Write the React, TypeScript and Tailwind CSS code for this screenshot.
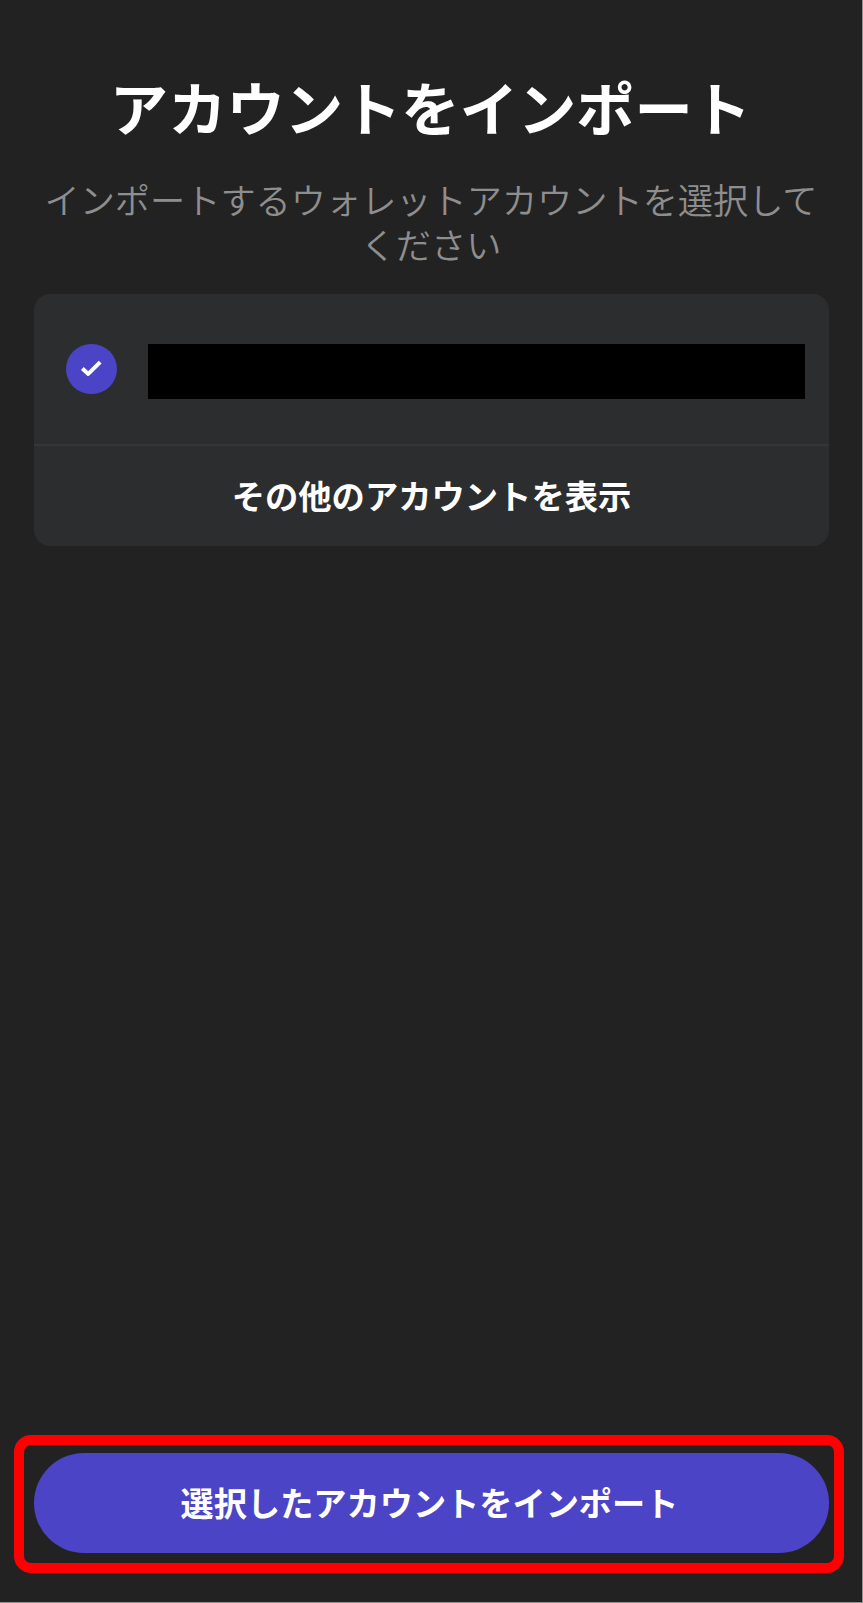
export default function App() {
  return (
    <div className="h-[1603px] w-[863px] bg-[#909090] pr-px pb-px font-['Noto_Sans_CJK_JP',sans-serif]">
      <main className="flex h-full flex-col bg-[#222222] text-white">
        <h1 className="mt-[63px] -ml-px text-center text-[58.3px] leading-[86px] font-bold whitespace-nowrap">アカウントをインポート</h1>
        <p className="mt-[30px] text-center font-['Liberation_Sans','Noto_Sans_CJK_JP',sans-serif] text-[35.2px] leading-[45px] font-[350] text-[#8e8e8e]">
          インポートするウォレットアカウントを選択して
          <br />
          ください
        </p>
        <section className="mt-[25px] ml-[34px] h-[252px] w-[795px] shrink-0 overflow-hidden rounded-[16px] bg-[#2c2d2f]">
          <div className="flex h-[152px] items-start border-b-2 border-[#363636] pl-[32px]">
            <span className="mt-[49.5px] flex size-[50.5px] items-center justify-center rounded-full bg-[#4c44c6]">
              <svg viewBox="0 0 51 51" className="size-[51px]" fill="none" stroke="white" strokeWidth="4" strokeLinejoin="round">
                <path d="M16.5 25.5L22.5 31L34.5 19" />
              </svg>
            </span>
            <span className="mt-[50px] ml-[31.5px] h-[55px] w-[657px] bg-black" />
          </div>
          <button className="flex h-[100px] w-full items-center justify-center pb-[3px] text-[33.3px] font-bold whitespace-nowrap">その他のアカウントを表示</button>
        </section>
        <div className="mt-auto mb-[29px] ml-[14px] h-[138px] w-[830px] shrink-0 rounded-[17px] border-[10px] border-[#ff0000] pt-[8px] pr-[5px] pb-[10px] pl-[10px]">
          <button className="flex h-full w-full items-center justify-center rounded-full bg-[#4c44c6] pr-[4px] pb-[2px] text-[33.2px] font-bold whitespace-nowrap">選択したアカウントをインポート</button>
        </div>
      </main>
    </div>
  );
}
